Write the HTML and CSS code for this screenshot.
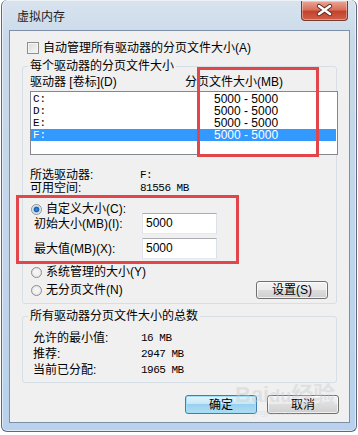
FILE: index.html
```html
<!DOCTYPE html>
<html lang="zh-CN">
<head>
  <meta charset="UTF-8" />
  <title>虚拟内存</title>
  <link rel="stylesheet" href="styles.css">
</head>
<body>

<div class="window">
  <div class="titlebar">
    <span class="title">虚拟内存</span>
    <span class="close">
      <svg width="45" height="19" viewBox="0 0 45 19" xmlns="http://www.w3.org/2000/svg">
        <path d="M17 5 L28 13 M28 5 L17 13" stroke="#5a2a22" stroke-width="4.4" stroke-linecap="round"/>
        <path d="M17 5 L28 13 M28 5 L17 13" stroke="#fff" stroke-width="2.6" stroke-linecap="round"/>
      </svg>
    </span>
  </div>

  <div class="client">
    <div class="check-row"><span class="checkbox"></span>自动管理所有驱动器的分页文件大小(A)</div>

    <fieldset class="group group-drives">
      <legend>每个驱动器的分页文件大小</legend>
      <div class="list-head">
        <span class="col-drive">驱动器 [卷标](D)</span>
        <span>分页文件大小(MB)</span>
      </div>
      <div class="listbox">
        <div class="row"><span class="drive">C:</span><span class="size">5000 - 5000</span></div>
        <div class="row"><span class="drive">D:</span><span class="size">5000 - 5000</span></div>
        <div class="row"><span class="drive">E:</span><span class="size">5000 - 5000</span></div>
        <div class="row selected"><span class="drive">F:</span><span class="size">5000 - 5000</span></div>
      </div>

      <div class="info">
        <div class="info-row"><span class="info-label">所选驱动器:</span><span class="mono">F:</span></div>
        <div class="info-row"><span class="info-label">可用空间:</span><span class="mono">81556 MB</span></div>
      </div>

      <div class="radio-row first"><span class="radio checked"></span>自定义大小(C):</div>
      <div class="field-row"><label>初始大小(MB)(I):</label><input type="text" value="5000"></div>
      <div class="field-row second"><label>最大值(MB)(X):</label><input type="text" value="5000"></div>
      <div class="radio-row system"><span class="radio"></span>系统管理的大小(Y)</div>
      <div class="split-row">
        <span class="radio-row"><span class="radio"></span>无分页文件(N)</span>
        <button type="button" class="btn btn-set">设置(S)</button>
      </div>
    </fieldset>

    <fieldset class="group group-total">
      <legend>所有驱动器分页文件大小的总数</legend>
      <div class="total-row"><span class="total-label">允许的最小值:</span><span class="mono">16 MB</span></div>
      <div class="total-row"><span class="total-label">推荐:</span><span class="mono">2947 MB</span></div>
      <div class="total-row"><span class="total-label">当前已分配:</span><span class="mono">1965 MB</span></div>
    </fieldset>

    <div class="actions">
      <button type="button" class="btn btn-default">确定</button>
      <button type="button" class="btn">取消</button>
    </div>
  </div>

  <!-- red marks drawn over the dialog -->
  <div class="mark mark-drives"></div>
  <div class="mark mark-custom"></div>

  <div class="watermark">Bai<span class="wm-du">du</span>经验<div class="wm-url">jingyan.baidu.com</div></div>
</div>

</body>
</html>
```

FILE: styles.css
```css
body {
  margin: 0;
  background: #fff;
  font-family: "Liberation Sans", "Noto Sans CJK SC", sans-serif;
  font-size: 12px;
  color: #000;
}
.window {
  position: relative;
  width: 356px;
  height: 432px;
  margin-left: 1px;
  box-sizing: border-box;
  padding: 0 6px 7px 7px;
  border: 1px solid #5a6b7e;
  border-top: none;
  border-radius: 6px;
  background: linear-gradient(#d9e3ee, #c9d9ea 40px, #b9d1ec);
  box-shadow: inset 0 0 0 1px rgba(255, 255, 255, 0.55);
}
.titlebar {
  display: flex;
  justify-content: space-between;
  align-items: flex-start;
  height: 30px;
}
.title {
  margin: 9px 0 0 8px;
  line-height: 14px;
  color: #1b1b1b;
  font-family: "Noto Sans CJK SC", sans-serif;
}
.close {
  width: 45px;
  height: 19px;
  margin: 1px 2px 0 0;
  border: 1px solid #7a3a2e;
  border-top: none;
  border-radius: 0 0 4px 4px;
  background: linear-gradient(#e9a898, #d8725c 45%, #c4432c 55%, #d0604a);
  box-shadow: inset 0 0 0 1px rgba(255, 255, 255, 0.35);
}
.close svg {
  display: block;
}
.client {
  height: 393px;
  box-sizing: border-box;
  padding: 10px 0 0 0;
  border: 1px solid #7d90a8;
  background: #f0f0f0;
}
.check-row {
  display: flex;
  align-items: center;
  height: 14px;
  padding-left: 17px;
  line-height: 14px;
}
.checkbox {
  width: 10px;
  height: 10px;
  margin-right: 4px;
  border: 1px solid #8f8f8f;
  background: linear-gradient(135deg, #dcdcdc, #f6f6f6);
  box-shadow: inset 0 0 0 1px #f4f4f4;
}

/* group boxes */
.group {
  width: 315px;
  box-sizing: border-box;
  margin: 0 0 0 12px;
  padding: 2px 0 4px 7px;
  border: 1px solid #d5dfe5;
  border-radius: 3px;
  min-width: 0;
}
.group legend {
  padding: 0 2px;
  margin-left: -2px;
  line-height: 14px;
}
.group-drives {
  margin-top: 4px;
}
.group-total {
  margin-top: 5px;
  padding-top: 7px;
}
.list-head {
  display: flex;
  line-height: 14px;
}
.col-drive {
  width: 155px;
}
.listbox {
  width: 308px;
  height: 64px;
  box-sizing: border-box;
  margin-top: 2px;
  padding-top: 1px;
  border: 1px solid #828790;
  background: #fff;
}
.row {
  display: flex;
  height: 12px;
  line-height: 12px;
  margin: 0 1px 0 0;
  padding-left: 2px;
  overflow: hidden;
}
.row .drive {
  width: 181px;
  font-family: "Liberation Mono", monospace;
  font-size: 11px;
}
.row .size {
  font-size: 12px;
}
.row.selected {
  background: #3399ff;
  color: #fff;
}
.mono {
  font-family: "Liberation Mono", monospace;
  font-size: 11px;
  letter-spacing: -0.5px;
}
.info {
  margin-top: 14px;
}
.info-row {
  display: flex;
  line-height: 13px;
}
.info-label {
  width: 110px;
}

/* radios and fields */
.radio-row {
  display: flex;
  align-items: center;
  line-height: 14px;
}
.radio-row.first {
  margin-top: 7px;
}
.radio-row.system {
  margin-top: 6px;
}
.radio {
  width: 11px;
  height: 11px;
  box-sizing: border-box;
  margin: 0 4px 0 1px;
  border: 1px solid #8e8f8f;
  border-radius: 50%;
  background: radial-gradient(circle, #f4f4f4 40%, #d6d6d6);
}
.radio.checked {
  background: radial-gradient(circle, #3b8bd6 0, #1a5ea8 2.4px, #b8d4ec 3.2px, #eef3f8 4.5px);
}
.field-row {
  display: flex;
  align-items: center;
  height: 21px;
  margin-top: -3px;
}
.field-row.second {
  margin-top: 4px;
}
.field-row label {
  width: 108px;
  margin-left: 4px;
  line-height: 14px;
}
.field-row input {
  width: 75px;
  height: 21px;
  box-sizing: border-box;
  padding: 0 3px 2px;
  border: 1px solid #abadb3;
  border-color: #abadb3 #dbdfe6 #e3e9ef #e2e3ea;
  font-family: "Liberation Sans", sans-serif;
  font-size: 12px;
  color: #000;
  background: #fff;
}
.split-row {
  display: flex;
  justify-content: space-between;
  align-items: center;
  height: 18px;
  margin-top: 2px;
  padding-right: 8px;
}
.total-row {
  display: flex;
  line-height: 16px;
}
.total-label {
  width: 108px;
  margin-left: 3px;
}

/* buttons */
.btn {
  width: 72px;
  height: 18px;
  padding: 0;
  border: 1px solid #707070;
  border-radius: 3px;
  background: linear-gradient(#f2f2f2, #ebebeb 50%, #dddddd 50%, #cfcfcf);
  box-shadow: inset 0 0 0 1px rgba(255, 255, 255, 0.7);
  font-family: "Liberation Sans", "Noto Sans CJK SC", sans-serif;
  font-size: 12px;
  line-height: 14px;
  color: #000;
}
.actions {
  display: flex;
  justify-content: flex-end;
  gap: 10px;
  margin: 12px 10px 0 0;
}
.actions .btn {
  height: 19px;
}
.btn-default {
  border-color: #3c7fb1;
  background: linear-gradient(#e5f4fc, #c4e5f6 50%, #98d1ef 50%, #b2dcf2);
  box-shadow: inset 0 0 0 1px #9ee0f7;
}

/* red marks over the screenshot */
.mark {
  position: absolute;
  box-sizing: border-box;
  border: 3px solid #e2454a;
}
.mark-drives {
  left: 195px;
  top: 67px;
  width: 122px;
  height: 90px;
}
.mark-custom {
  left: 14px;
  top: 195px;
  width: 223px;
  height: 69px;
}
.watermark {
  position: absolute;
  left: 233px;
  top: 383px;
  font-family: "Liberation Sans", "Noto Sans CJK SC", sans-serif;
  font-size: 22px;
  font-weight: 700;
  line-height: 24px;
  color: rgba(200, 205, 210, 0.45);
  pointer-events: none;
}
.wm-du {
  font-size: 18px;
}
.wm-url {
  font-size: 8px;
  font-weight: 400;
  line-height: 10px;
  text-align: center;
}
```
